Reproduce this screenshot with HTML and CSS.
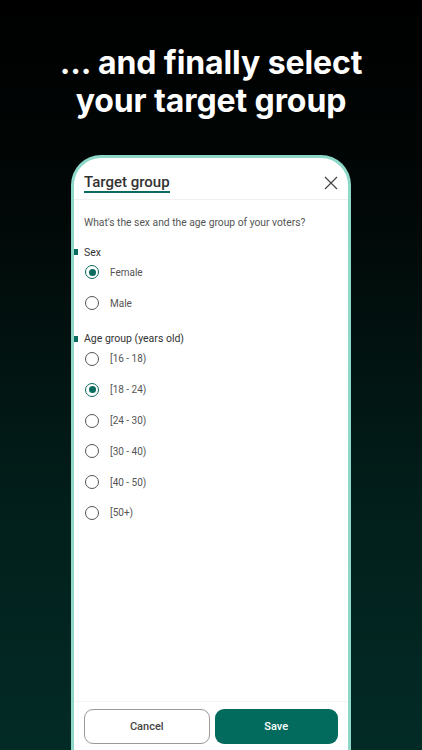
FILE: index.html
```html
<!DOCTYPE html>
<html lang="en">
<head>
    <meta charset="UTF-8">
    <meta name="viewport" content="width=device-width, initial-scale=1.0">
    <link rel="stylesheet" href="styles.css">
</head>
<body>
<div class="screen">
    <h1 class="headline">... and finally select<br>your target group</h1>

    <div class="phone">
        <div class="sheet-header">
            <h2 class="sheet-title">Target group</h2>
            <svg class="close" width="14" height="14" viewBox="0 0 14 14">
                <path d="M1 1 L13 13 M13 1 L1 13" stroke="#444" stroke-width="1.2" fill="none"/>
            </svg>
        </div>

        <div class="sheet-body">
            <p class="question">What's the sex and the age group of your voters?</p>

            <div class="section">
                <div class="section-label">Sex</div>
                <label class="option"><span class="radio checked"></span>Female</label>
                <label class="option"><span class="radio"></span>Male</label>
            </div>

            <div class="section">
                <div class="section-label">Age group (years old)</div>
                <label class="option"><span class="radio"></span>[16 - 18)</label>
                <label class="option"><span class="radio checked"></span>[18 - 24)</label>
                <label class="option"><span class="radio"></span>[24 - 30)</label>
                <label class="option"><span class="radio"></span>[30 - 40)</label>
                <label class="option"><span class="radio"></span>[40 - 50)</label>
                <label class="option"><span class="radio"></span>[50+)</label>
            </div>
        </div>

        <div class="sheet-footer">
            <button class="btn cancel">Cancel</button>
            <button class="btn save">Save</button>
        </div>
    </div>
</div>
</body>
</html>
```

FILE: styles.css
```css
body {
    margin: 0;
    width: 422px;
    height: 750px;
    overflow: hidden;
    background: linear-gradient(180deg, #000 0%, #010807 28%, #021f1b 68%, #032b26 100%);
    font-family: Roboto, "Noto Sans", sans-serif;
}

.screen {
    display: flex;
    flex-direction: column;
    align-items: center;
    height: 750px;
}

.headline {
    margin: 44px 0 0;
    font-family: Inter, sans-serif;
    font-weight: 700;
    font-size: 32px;
    line-height: 38px;
    color: #fff;
    text-align: center;
    letter-spacing: -0.1px;
}

.phone {
    margin-top: 35px;
    width: 274px;
    flex: 1;
    background: #fff;
    border: 3px solid #8ed8c9;
    border-bottom: none;
    border-radius: 30px 30px 0 0;
    display: flex;
    flex-direction: column;
}

.sheet-header {
    box-sizing: border-box;
    display: flex;
    align-items: center;
    justify-content: space-between;
    height: 42px;
    padding: 9px 10px 0 10px;
    border-bottom: 1px solid #f0f0f0;
}

.sheet-title {
    margin: 0;
    font-size: 15px;
    font-weight: 500;
    color: #333;
    border-bottom: 2.5px solid #0a6b5f;
    line-height: 17px;
}

.close {
    display: block;
}

.sheet-body {
    flex: 1;
    padding: 16px 0 0;
}

.question {
    margin: 0 0 15px 10px;
    font-size: 10.3px;
    color: #555;
}

.section {
    margin-bottom: 12px;
}

.section-label {
    display: flex;
    align-items: center;
    font-size: 10.5px;
    color: #333;
    height: 16px;
}

.section-label::before {
    content: "";
    width: 4px;
    height: 6px;
    background: #0a6b5f;
    margin-right: 6px;
}

.option {
    display: flex;
    align-items: center;
    height: 30.8px;
    padding-left: 10px;
    font-size: 10px;
    color: #555;
}

.option:first-of-type {
    margin-top: -3px;
}

.radio {
    box-sizing: border-box;
    width: 14px;
    height: 14px;
    border: 1.5px solid #555;
    border-radius: 50%;
    margin-left: 1px;
    margin-right: 11px;
    display: flex;
    align-items: center;
    justify-content: center;
}

.radio.checked {
    border-color: #0a6b5f;
}

.radio.checked::after {
    content: "";
    width: 7px;
    height: 7px;
    border-radius: 50%;
    background: #0a6b5f;
}

.sheet-footer {
    display: flex;
    gap: 5px;
    padding: 7px 10px 6px;
    border-top: 1px solid #f3f3f3;
}

.btn {
    flex: 1;
    height: 35px;
    border-radius: 9px;
    font-family: Roboto, sans-serif;
    font-size: 11px;
    font-weight: 500;
}

.cancel {
    background: #fff;
    border: 1px solid #999;
    color: #444;
}

.save {
    background: #036b5e;
    border: none;
    color: #fff;
}
```
